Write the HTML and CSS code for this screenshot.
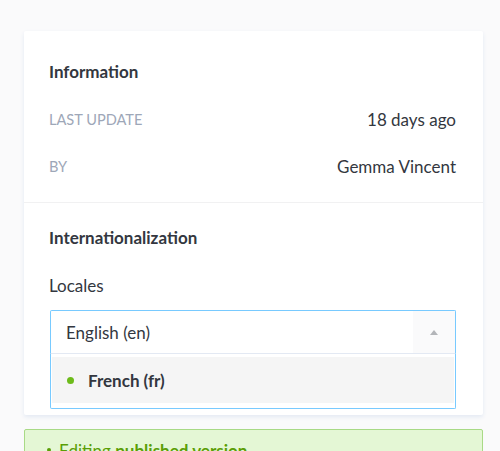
FILE: index.html
```html
<!DOCTYPE html>
<html>
<head>
<meta charset="utf-8">
<link rel="stylesheet" href="styles.css">
</head>
<body>
<div class="page">
  <div class="card">
    <section class="info">
      <h2 class="title">Information</h2>
      <div class="row"><span class="label">Last update</span><span class="value">18 days ago</span></div>
      <div class="row"><span class="label">By</span><span class="value">Gemma Vincent</span></div>
    </section>
    <section class="i18n">
      <h2 class="title">Internationalization</h2>
      <div class="field-label">Locales</div>
      <div class="select">
        <div class="control">
          <span class="current">English (en)</span>
          <span class="indicator"><span class="caret"></span></span>
        </div>
        <div class="menu">
          <div class="option"><span class="dot"></span><span class="opt-text">French (fr)</span></div>
        </div>
      </div>
    </section>
  </div>
  <div class="banner"><span class="bullet"></span><span>Editing <b>published version</b></span></div>
</div>
</body>
</html>
```
FILE: styles.css
```css
html, body {
  margin: 0;
  padding: 0;
  background: #fafafb;
  font-family: Lato, "Open Sans", sans-serif;
  color: #333740;
}
.page {
  padding: 31px 17px 0 24px;
  display: flex;
  flex-direction: column;
  gap: 14px;
}
.card {
  background: #fff;
  border-radius: 2px;
  box-shadow: 0 2px 4px #e3e9f3;
  display: flex;
  flex-direction: column;
}
.title {
  margin: 0;
  font-size: 17px;
  line-height: 20px;
  height: 20px;
  font-weight: 700;
  color: #333740;
}
.info {
  padding: 31px 27px 25px 25px;
  display: flex;
  flex-direction: column;
  gap: 28px;
  border-bottom: 1px solid #f1f1f2;
}
.row {
  display: flex;
  justify-content: space-between;
  align-items: center;
  height: 20px;
  line-height: 20px;
}
.info .row + .row { margin-top: -1px; }
.label {
  text-transform: uppercase;
  color: #9ea7b8;
  font-size: 14.6px;
}
.value {
  font-size: 17px;
  color: #333740;
}
.i18n {
  padding: 25px 27px 6px 25px;
  display: flex;
  flex-direction: column;
}
.field-label {
  margin-top: 28px;
  font-size: 17px;
  line-height: 20px;
  height: 20px;
}
.select {
  margin-top: 14px;
  margin-left: 1px;
}
.control {
  height: 42px;
  border: 1px solid #78caff;
  border-bottom: 1px solid #e3e9f3;
  border-radius: 2px 2px 0 0;
  display: flex;
  align-items: center;
  justify-content: space-between;
}
.current {
  padding-left: 15px;
  font-size: 17px;
}
.indicator {
  width: 42px;
  height: 42px;
  background: #fafafb;
  display: flex;
  align-items: center;
  justify-content: center;
}
.caret {
  width: 0;
  height: 0;
  border-left: 4px solid transparent;
  border-right: 4px solid transparent;
  border-bottom: 5px solid #b3b5b9;
}
.menu {
  border: 1px solid #78caff;
  border-top: none;
  border-radius: 0 0 2px 2px;
  padding: 3px 1px 5px 1px;
}
.option {
  height: 46px;
  background: #f5f5f5;
  display: flex;
  align-items: center;
  padding-left: 15px;
}
.dot {
  width: 7px;
  height: 7px;
  border-radius: 50%;
  background: #6dbb1a;
  margin-right: 14px;
}
.opt-text {
  font-weight: 700;
  font-size: 17px;
}
.banner {
  background: #e4f7d5;
  border: 1px solid #a9da86;
  border-radius: 2px;
  height: 40px;
  display: flex;
  align-items: center;
  padding-left: 22px;
  color: #5a9e06;
  font-size: 17px;
  gap: 8px;
}
.bullet {
  width: 4px;
  height: 4px;
  border-radius: 50%;
  background: #5a9e06;
}
.banner b { font-weight: 700; }
```
